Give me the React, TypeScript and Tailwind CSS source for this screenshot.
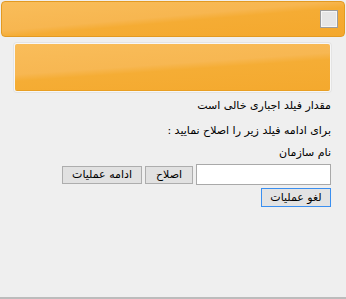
export default function App() {
  const font = { fontFamily: '"DejaVu Sans", "Noto Sans", sans-serif' };
  return (
    <div
      dir="rtl"
      className="w-[346px] h-[299px] bg-[#efefef] flex flex-col overflow-hidden text-[11px] text-black"
      style={font}
    >
      <div className="mx-[1px] mt-[1px] h-[36px] rounded-[4px] border border-[#e39a22] bg-[linear-gradient(175deg,#f9bd5a_0%,#f7b650_45%,#f5ac34_55%,#f4a82d_100%)] flex items-center pr-[6px] shrink-0">
        <div className="w-[18px] h-[18px] border border-[#9c9c9c] bg-[#e6e6e6] shadow-[inset_0_0_0_1px_#f6f6f6]" />
      </div>
      <div className="mr-[15px] ml-[14px] mt-[6px] h-[49px] rounded-[3px] border border-[#f7f7f7] shadow-[0_0_0_1px_#e4e4e4] shrink-0 overflow-hidden">
        <div className="w-full h-full border-b border-[#e89f24] bg-[linear-gradient(176deg,#f9bd5a_0%,#f7b752_45%,#f5ad35_55%,#f4a92e_100%)]" />
      </div>
      <div className="pr-[15px] flex flex-col">
        <div className="mt-[7px] h-[14px] leading-[14px]">مقدار فیلد اجباری خالی است</div>
        <div className="mt-[11px] h-[14px] leading-[14px]">برای ادامه فیلد زیر را اصلاح نمایید :</div>
        <div className="mt-[8px] h-[14px] leading-[14px]">نام سازمان</div>
        <div className="mt-[4px] flex items-center gap-[3px]">
          <input
            className="w-[135px] h-[21px] border border-[#a9a9a9] bg-white outline-none px-1"
            style={font}
          />
          <button className="w-[48px] h-[18px] border border-[#adadad] bg-[#e1e1e1] leading-[14px] text-[11px]" style={font}>
            اصلاح
          </button>
          <button className="w-[80px] h-[18px] border border-[#adadad] bg-[#e1e1e1] leading-[14px] text-[11px]" style={font}>
            ادامه عملیات
          </button>
        </div>
        <div className="mt-[3px] flex">
          <button className="w-[70px] h-[19px] border border-[#3a8ff0] bg-[#e3e3e3] leading-[15px] text-[11px]" style={font}>
            لغو عملیات
          </button>
        </div>
      </div>
      <div className="mt-auto h-[2px] bg-[#bcbcbc] shrink-0" />
    </div>
  );
}
